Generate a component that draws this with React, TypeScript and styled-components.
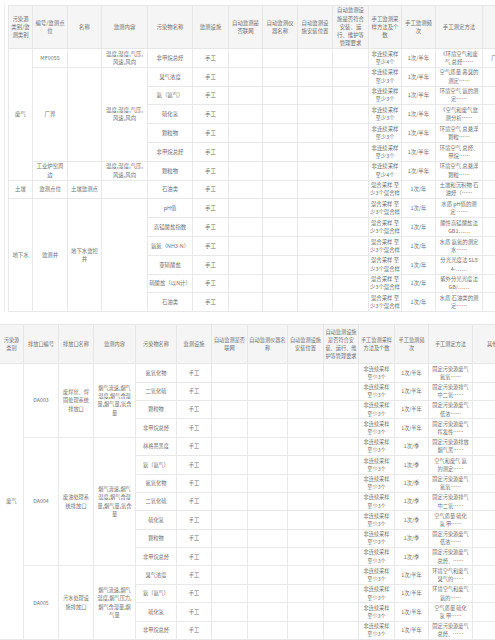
import React from "react";
import styled, { createGlobalStyle } from "styled-components";

const GlobalStyle = createGlobalStyle`
  html, body {
    margin: 0;
    padding: 0;
    background: #fff;
  }
  body {
    width: 495px;
    height: 640px;
    overflow: hidden;
  }
`;

const Page = styled.div`
  width: 495px;
  height: 640px;
  overflow: hidden;
  box-sizing: border-box;
  padding-top: 5px;
  font-family: "Noto Sans CJK SC", "Noto Sans", sans-serif;
  color: #707070;
`;

const Sheet = styled.div<{ $left: number; $gap: number; $frame?: boolean }>`
  margin-left: ${(p) => p.$left}px;
  margin-bottom: ${(p) => p.$gap}px;
  border-left: ${(p) => (p.$frame ? "1px solid #ececec" : "none")};
  padding-left: ${(p) => (p.$frame ? 3 : 0)}px;
  width: max-content;
`;

const Table = styled.table<{
  $width: number;
  $font: number;
  $headPad: number;
  $cellPad: number;
}>`
  --head-pad: ${(p) => p.$headPad}px;
  --cell-pad: ${(p) => p.$cellPad}px;
  border-collapse: collapse;
  table-layout: fixed;
  width: ${(p) => p.$width}px;
  font-size: ${(p) => p.$font}px;
  line-height: 8.3px;
`;

const HeadRow = styled.tr<{ $h: number }>`
  height: ${(p) => p.$h}px;
`;

const Row = styled.tr<{ $h: number }>`
  height: ${(p) => p.$h}px;
`;

const HeadCell = styled.th`
  background: #f5f5f5;
  border: 1px solid #e6e6e6;
  font-weight: normal;
  padding: 0 var(--head-pad);
  text-align: center;
  vertical-align: middle;
  word-break: break-all;
  overflow: hidden;
`;

const HeadText = styled.div<{ $max: number }>`
  max-height: ${(p) => p.$max}px;
  overflow: hidden;
`;

const Cell = styled.td<{ $keep?: boolean }>`
  border: 1px solid #e8e8e8;
  padding: 0 var(--cell-pad);
  text-align: center;
  vertical-align: middle;
  word-break: ${(p) => (p.$keep ? "keep-all" : "break-all")};
  overflow: hidden;
`;

const Method = styled.div<{ $inset: number }>`
  display: -webkit-box;
  -webkit-line-clamp: 2;
  -webkit-box-orient: vertical;
  overflow: hidden;
  padding: 0 ${(p) => p.$inset}px;
`;

type Item = {
  name: string;
  sample: string;
  freq: string;
  method: string;
  other?: string;
};

function Tail({ r, inset }: { r: Item; inset: number }) {
  return (
    <>
      <Cell>{r.name}</Cell>
      <Cell>手工</Cell>
      <Cell />
      <Cell />
      <Cell />
      <Cell />
      <Cell>{r.sample}</Cell>
      <Cell>{r.freq}</Cell>
      <Cell>
        <Method $inset={inset}>{r.method}</Method>
      </Cell>
      <Cell>{r.other ?? ""}</Cell>
    </>
  );
}

const S3 = "非连续采样 至少3个";
const S4 = "非连续采样 至少4个";
const MIX = "混合采样 至少3个混合样";
const HALF = "1次/半年";
const YEAR = "1次/年";
const SEASON = "1次/季";
const WEATHER = "温度,湿度,气压,风速,风向";
const FLUE = "烟气流速,烟气温度,烟气含湿量,烟气量,氧含量";
const FLUE2 = "烟气流速,烟气温度,烟气压力,烟气含湿量,烟气量";

const heads1 = [
  "污染源类别/监测类别",
  "编号/监测点位",
  "名称",
  "监测内容",
  "污染物名称",
  "监测设施",
  "自动监测是否联网",
  "自动监测仪器名称",
  "自动监测设施安装位置",
  "自动监测设施是否符合安装、运行、维护等管理要求",
  "手工监测采样方法及个数",
  "手工监测频次",
  "手工测定方法",
  "其他信息",
];

const heads2 = ["污染源 类别", "排放口编号", "排放口名称", ...heads1.slice(3)];

const cols1 = [24, 35, 34, 46, 45, 36, 34, 35, 35, 36, 33, 34, 47, 50];
const cols2 = [24, 35, 35, 42, 41, 35, 36, 40, 36, 35, 36, 34, 44, 50];

const site: Item[] = [
  { name: "非甲烷总烃", sample: S4, freq: HALF, method: "《环境空气和废气 总烃……", other: "厂界外监控点" },
  { name: "臭气浓度", sample: S3, freq: HALF, method: "空气质量 恶臭的测定……" },
  { name: "氨（氨气）", sample: S3, freq: HALF, method: "环境空气 氨的测定……" },
  { name: "硫化氢", sample: S3, freq: HALF, method: "《空气和废气监测分析……" },
  { name: "颗粒物", sample: S3, freq: HALF, method: "环境空气 总悬浮颗粒……" },
  { name: "非甲烷总烃", sample: S3, freq: HALF, method: "环境空气 总烃、甲烷……" },
  { name: "颗粒物", sample: S4, freq: HALF, method: "环境空气 总悬浮颗粒……" },
];

const soil: Item = { name: "石油类", sample: MIX, freq: YEAR, method: "土壤和沉积物 石油烃（……" };

const water: Item[] = [
  { name: "pH值", sample: MIX, freq: YEAR, method: "水质 pH值的测定 ……" },
  { name: "高锰酸盐指数", sample: MIX, freq: YEAR, method: "酸性高锰酸盐法 GB1……" },
  { name: "氨氮（NH3-N）", sample: MIX, freq: YEAR, method: "水质 氨氮的测定 水……" },
  { name: "亚硝酸盐", sample: MIX, freq: YEAR, method: "分光光度法 SL84-……" },
  { name: "硝酸盐（以N计）", sample: MIX, freq: YEAR, method: "紫外分光光度法 GB/……" },
  { name: "石油类", sample: MIX, freq: YEAR, method: "水质 石油类的测定……" },
];

const da003: Item[] = [
  { name: "氮氧化物", sample: S3, freq: HALF, method: "固定污染源废气 氮氧……" },
  { name: "二氧化硫", sample: S3, freq: HALF, method: "固定污染源排气 中二氧……" },
  { name: "颗粒物", sample: S3, freq: HALF, method: "固定污染源废气 低浓……" },
  { name: "非甲烷总烃", sample: S3, freq: HALF, method: "固定污染源废气 挥发性……" },
];

const da004: Item[] = [
  { name: "林格曼黑度", sample: S3, freq: SEASON, method: "固定污染源排放 烟气黑……" },
  { name: "氨（氨气）", sample: S3, freq: SEASON, method: "空气和废气 氨 的测定……" },
  { name: "氮氧化物", sample: S3, freq: SEASON, method: "固定污染源废气 氮氧……" },
  { name: "二氧化硫", sample: S3, freq: SEASON, method: "固定污染源排气 中二氧……" },
  { name: "硫化氢", sample: S3, freq: SEASON, method: "空气质量 硫化 氢 甲……" },
  { name: "颗粒物", sample: S3, freq: SEASON, method: "固定污染源废气 低浓……" },
  { name: "非甲烷总烃", sample: S3, freq: SEASON, method: "固定污染源废气 总烃、……" },
];

const da005: Item[] = [
  { name: "臭气浓度", sample: S3, freq: HALF, method: "环境空气和废气 臭气的……" },
  { name: "氨（氨气）", sample: S3, freq: HALF, method: "环境空气和废气 氨的……" },
  { name: "硫化氢", sample: S3, freq: HALF, method: "空气质量 硫化 氢 甲……" },
  { name: "非甲烷总烃", sample: S3, freq: HALF, method: "固定污染源废气 总烃、……" },
];

const sum = (a: number[]) => a.reduce((s, n) => s + n, 0);

const H1 = 18.8;
const H2 = 18.4;
const IN1 = 2;
const IN2 = 0;

function Head({ cols, titles, h }: { cols: number[]; titles: string[]; h: number }) {
  return (
    <>
      <colgroup>
        {cols.map((w, i) => (
          <col key={i} style={{ width: w }} />
        ))}
      </colgroup>
      <thead>
        <HeadRow $h={h}>
          {titles.map((t) => (
            <HeadCell key={t}>
              <HeadText $max={h - 1}>{t}</HeadText>
            </HeadCell>
          ))}
        </HeadRow>
      </thead>
    </>
  );
}

function PlanTable() {
  return (
    <Table $width={sum(cols1)} $font={5.4} $headPad={2} $cellPad={1}>
      <Head cols={cols1} titles={heads1} h={43} />
      <tbody>
        <Row $h={H1}>
          <Cell rowSpan={7}>废气</Cell>
          <Cell>MF0055</Cell>
          <Cell />
          <Cell $keep>{WEATHER}</Cell>
          <Tail r={site[0]} inset={IN1} />
        </Row>
        <Row $h={H1}>
          <Cell rowSpan={5}>厂界</Cell>
          <Cell rowSpan={5} />
          <Cell rowSpan={5} $keep>
            {WEATHER}
          </Cell>
          <Tail r={site[1]} inset={IN1} />
        </Row>
        {site.slice(2, 6).map((r, i) => (
          <Row $h={H1} key={i}>
            <Tail r={r} inset={IN1} />
          </Row>
        ))}
        <Row $h={H1}>
          <Cell>工业炉窑周边</Cell>
          <Cell />
          <Cell $keep>{WEATHER}</Cell>
          <Tail r={site[6]} inset={IN1} />
        </Row>
        <Row $h={H1}>
          <Cell>土壤</Cell>
          <Cell>监测点位</Cell>
          <Cell>土壤监测点</Cell>
          <Cell />
          <Tail r={soil} inset={IN1} />
        </Row>
        <Row $h={H1}>
          <Cell rowSpan={6}>地下水</Cell>
          <Cell rowSpan={6}>监测井</Cell>
          <Cell rowSpan={6}>地下水监控井</Cell>
          <Cell rowSpan={6} />
          <Tail r={water[0]} inset={IN1} />
        </Row>
        {water.slice(1).map((r, i) => (
          <Row $h={H1} key={i}>
            <Tail r={r} inset={IN1} />
          </Row>
        ))}
      </tbody>
    </Table>
  );
}

function OutletGroup({
  code,
  title,
  content,
  items,
  first,
}: {
  code: string;
  title: string;
  content: string;
  items: Item[];
  first?: number;
}) {
  return (
    <>
      <Row $h={H2}>
        {first ? <Cell rowSpan={first}>废气</Cell> : null}
        <Cell rowSpan={items.length}>{code}</Cell>
        <Cell rowSpan={items.length}>{title}</Cell>
        <Cell rowSpan={items.length}>{content}</Cell>
        <Tail r={items[0]} inset={IN2} />
      </Row>
      {items.slice(1).map((r, i) => (
        <Row $h={H2} key={i}>
          <Tail r={r} inset={IN2} />
        </Row>
      ))}
    </>
  );
}

function OutletTable() {
  const total = da003.length + da004.length + da005.length;
  return (
    <Table $width={sum(cols2)} $font={5.2} $headPad={1} $cellPad={2.5}>
      <Head cols={cols2} titles={heads2} h={39} />
      <tbody>
        <OutletGroup
          code="DA003"
          title="废焊丝、焊固处理系统排放口"
          content={FLUE}
          items={da003}
          first={total}
        />
        <OutletGroup code="DA004" title="废油处理系统排放口" content={FLUE} items={da004} />
        <OutletGroup code="DA005" title="污水处理设施排放口" content={FLUE2} items={da005} />
      </tbody>
    </Table>
  );
}

export default function App() {
  return (
    <Page>
      <GlobalStyle />
      <Sheet $left={4} $gap={12} $frame>
        <PlanTable />
      </Sheet>
      <Sheet $left={-1} $gap={0}>
        <OutletTable />
      </Sheet>
    </Page>
  );
}
